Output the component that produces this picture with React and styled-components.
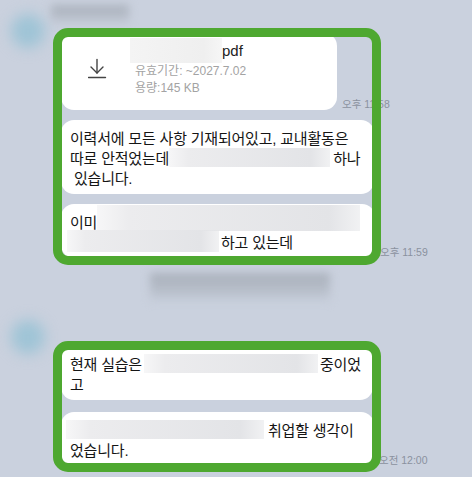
import React from 'react'
import styled, { createGlobalStyle } from 'styled-components'

const Global = createGlobalStyle`
  html, body {
    margin: 0;
    padding: 0;
    background: #cad1de;
  }
  body {
    font-family: "Liberation Sans", "Noto Sans CJK KR", sans-serif;
    color: #151515;
  }
`

const Page = styled.div`
  width: 472px;
  height: 477px;
  overflow: hidden;
  background: #cad1de;
  display: flex;
  flex-direction: column;
`

const Group = styled.div`
  display: flex;
  padding-top: ${p => p.$top}px;
`

const AvatarCol = styled.div`
  width: 61px;
  flex: none;
`

const Avatar = styled.div`
  width: 34px;
  height: 34px;
  margin: ${p => p.$top}px 0 0 11px;
  border-radius: 50%;
  background: #9fc4d6;
  filter: blur(7px);
`

const MsgCol = styled.div`
  display: flex;
  flex-direction: column;
`

const NameBlur = styled.div`
  width: ${p => p.$w}px;
  height: ${p => p.$h}px;
  margin: 0 0 ${p => p.$gap}px ${p => p.$ml}px;
  background: linear-gradient(180deg, #a9b0bb, #b6bdc8 55%, rgba(202, 209, 222, 0.2));
  filter: blur(4px);
`

const List = styled.div`
  position: relative;
  display: flex;
  flex-direction: column;
  gap: ${p => p.$gap}px;
`

const Frame = styled.div`
  position: absolute;
  top: -5px;
  left: -8px;
  bottom: ${p => p.$bottom}px;
  width: 328px;
  box-sizing: border-box;
  border: 9px solid #4ea830;
  border-radius: 15px;
  pointer-events: none;
  z-index: 2;
`

const Row = styled.div`
  display: flex;
  align-items: flex-end;
  gap: 5px;
`

const Bubble = styled.div`
  width: ${p => p.$w}px;
  box-sizing: border-box;
  background: #fff;
  border-radius: 13px;
  padding: 7px 9px;
  font-size: 15px;
  letter-spacing: -0.2px;
`

const Line = styled.div`
  display: flex;
  align-items: center;
  height: 20px;
  white-space: pre;
`

const Blur = styled.span`
  display: inline-block;
  flex: none;
  width: ${p => p.$w}px;
  height: ${p => p.$h || 20}px;
  margin: ${p => p.$m || '0'};
  background: linear-gradient(90deg, rgba(238, 238, 240, 0.5), #ececee 12%, #e3e4e7 88%, rgba(227, 228, 231, 0.5));
`

const Time = styled.span`
  font-size: 10.5px;
  line-height: 13px;
  color: #8a919e;
  white-space: nowrap;
  margin-bottom: -1px;
`

const FileBubble = styled.div`
  width: 276px;
  height: 77px;
  background: #fff;
  border-radius: 13px;
  display: flex;
`

const IconCol = styled.div`
  width: 74px;
  flex: none;
  padding: 25px 0 0 27px;
  box-sizing: border-box;
  color: #444;
`

const FileInfo = styled.div`
  display: flex;
  flex-direction: column;
  padding-top: 5px;
`

const FileName = styled.div`
  display: flex;
  align-items: center;
  height: 25px;
  margin-left: -5px;
  font-size: 15px;
  color: #222;
`

const NameMask = styled.span`
  width: 92px;
  height: 25px;
  background: linear-gradient(90deg, #f4f4f4, #efefef 80%, #f6f6f6);
`

const Meta = styled.div`
  font-size: 12px;
  line-height: 17px;
  color: #a3a3a3;
`

const DownloadIcon = () => (
  <svg width="20" height="21" viewBox="0 0 20 21" fill="none" stroke="currentColor" strokeWidth="1.4" strokeLinecap="round" strokeLinejoin="round">
    <path d="M9 1.5v13.5" />
    <path d="M3 9l6 6 6-6" />
    <path d="M0.5 19.5h17" />
  </svg>
)

const App = () => (
  <Page>
    <Global />

    <Group $top={5}>
      <AvatarCol>
        <Avatar $top={9} />
      </AvatarCol>
      <MsgCol>
        <NameBlur $w={78} $h={20} $gap={8} $ml={-10} />
        <List $gap={10}>
          <Frame $bottom={-7} />
          <Row>
            <FileBubble>
              <IconCol>
                <DownloadIcon />
              </IconCol>
              <FileInfo>
                <FileName>
                  <NameMask />
                  pdf
                </FileName>
                <Meta>유효기간: ~2027.7.02</Meta>
                <Meta>용량:145 KB</Meta>
              </FileInfo>
            </FileBubble>
            <Time>오후 11:58</Time>
          </Row>
          <Row>
            <Bubble $w={313}>
              <Line>이력서에 모든 사항 기재되어있고, 교내활동은</Line>
              <Line>
                따로 안적었는데
                <Blur $w={161} $h={19} $m="0 3px 0 0" />
                하나
              </Line>
              <Line> 있습니다.</Line>
            </Bubble>
          </Row>
          <Row>
            <Bubble $w={314}>
              <Line>
                이미
                <Blur $w={263} $h={26} $m="-6px 0 0 0" />
              </Line>
              <Line>
                <Blur $w={152} $h={22} $m="0 2px 0 -3px" />
                하고 있는데
              </Line>
            </Bubble>
            <Time>오후 11:59</Time>
          </Row>
        </List>
      </MsgCol>
    </Group>

    <Group $top={15}>
      <AvatarCol>
        <Avatar $top={47} />
      </AvatarCol>
      <MsgCol>
        <NameBlur $w={180} $h={30} $gap={43} $ml={89} />
        <List $gap={12}>
          <Frame $bottom={-6} />
          <Row>
            <Bubble $w={312}>
              <Line>
                현재 실습은
                <Blur $w={174} $h={19} $m="0 2px" />
                중이었
              </Line>
              <Line>고</Line>
            </Bubble>
          </Row>
          <Row>
            <Bubble $w={313}>
              <Line>
                <Blur $w={198} $h={19} $m="0 4px 0 -4px" />
                취업할 생각이
              </Line>
              <Line>었습니다.</Line>
            </Bubble>
            <Time>오전 12:00</Time>
          </Row>
        </List>
      </MsgCol>
    </Group>
  </Page>
)

export default App
